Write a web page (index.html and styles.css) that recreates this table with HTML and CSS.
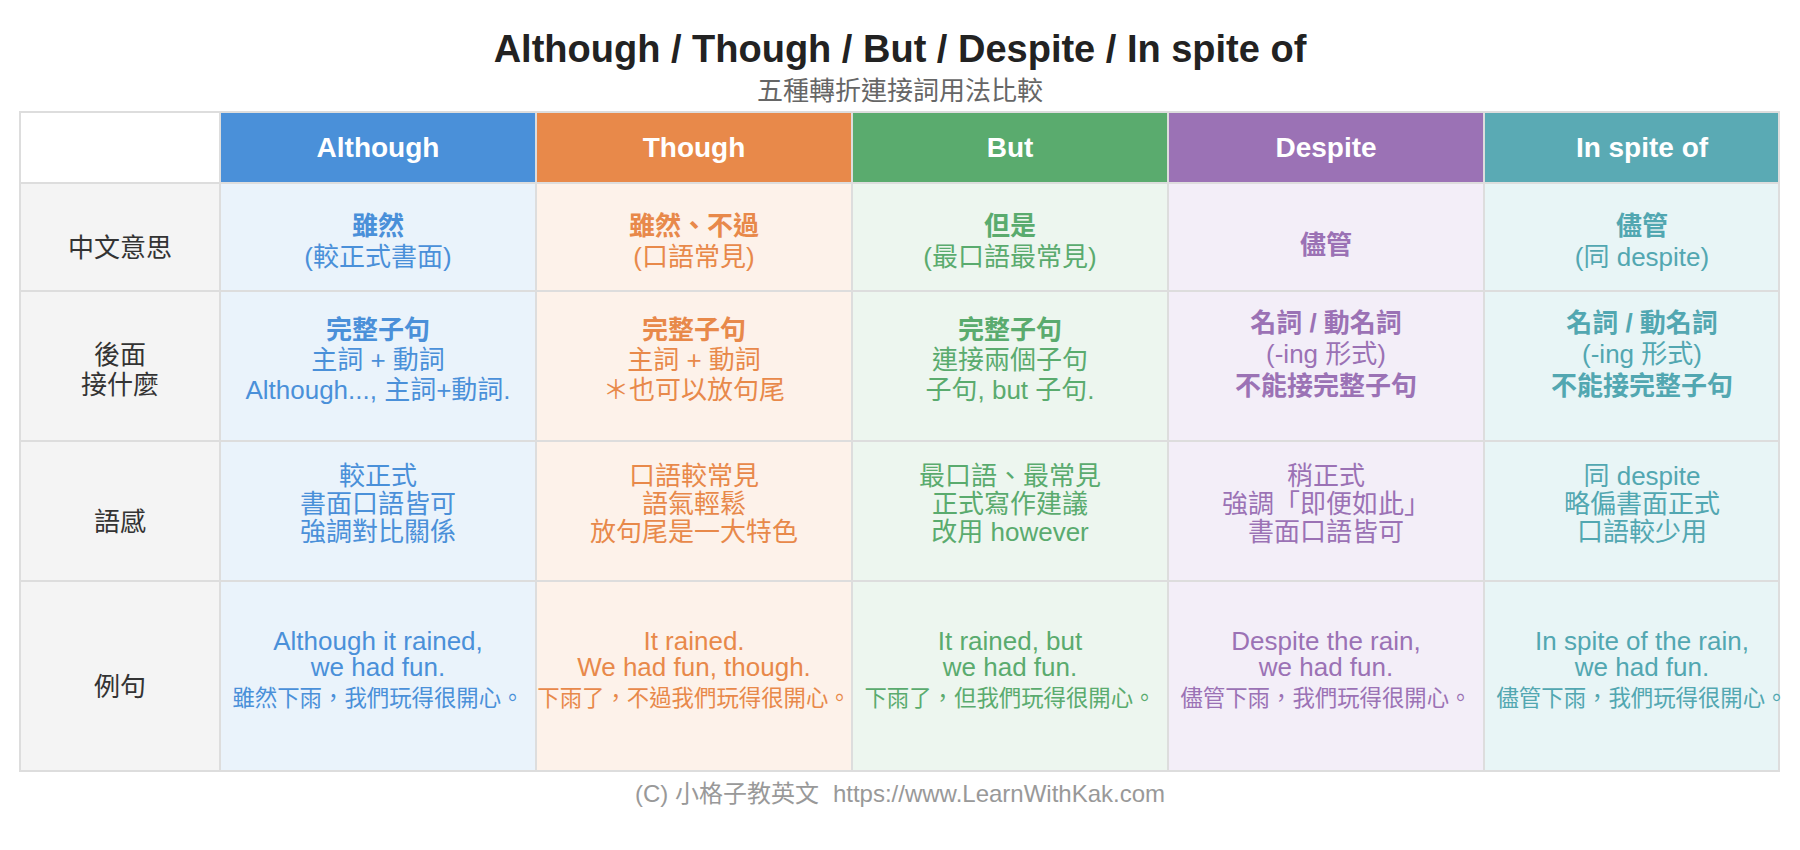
FILE: index.html
```html
<!DOCTYPE html>
<html lang="zh-Hant">
<head>
<meta charset="utf-8">
<title>Although / Though / But / Despite / In spite of</title>
<link rel="stylesheet" href="styles.css">
</head>
<body>
<div class="page">
  <h1 class="title">Although / Though / But / Despite / In spite of</h1>
  <div class="subtitle">五種轉折連接詞用法比較</div>

  <div class="grid">
    <div class="cell corner"></div>
    <div class="cell head h-blue">Although</div>
    <div class="cell head h-orange">Though</div>
    <div class="cell head h-green">But</div>
    <div class="cell head h-purple">Despite</div>
    <div class="cell head h-teal">In spite of</div>

    <div class="cell label r1">中文意思</div>
    <div class="cell c r1 blue"><b>雖然</b><span>(較正式書面)</span></div>
    <div class="cell c r1 orange"><b>雖然、不過</b><span>(口語常見)</span></div>
    <div class="cell c r1 green"><b>但是</b><span>(最口語最常見)</span></div>
    <div class="cell c r1 single purple"><b>儘管</b></div>
    <div class="cell c r1 teal"><b>儘管</b><span>(同 despite)</span></div>

    <div class="cell label r2"><span>後面</span><span>接什麼</span></div>
    <div class="cell c r2 blue"><b>完整子句</b><span>主詞 + 動詞</span><span>Although..., 主詞+動詞.</span></div>
    <div class="cell c r2 orange"><b>完整子句</b><span>主詞 + 動詞</span><span>＊也可以放句尾</span></div>
    <div class="cell c r2 green"><b>完整子句</b><span>連接兩個子句</span><span>子句, but 子句.</span></div>
    <div class="cell c r2 np purple"><b>名詞 / 動名詞</b><span>(-ing 形式)</span><b>不能接完整子句</b></div>
    <div class="cell c r2 np teal"><b>名詞 / 動名詞</b><span>(-ing 形式)</span><b>不能接完整子句</b></div>

    <div class="cell label r3">語感</div>
    <div class="cell c r3 blue"><span>較正式</span><span>書面口語皆可</span><span>強調對比關係</span></div>
    <div class="cell c r3 orange"><span>口語較常見</span><span>語氣輕鬆</span><span>放句尾是一大特色</span></div>
    <div class="cell c r3 green"><span>最口語、最常見</span><span>正式寫作建議</span><span>改用 however</span></div>
    <div class="cell c r3 purple"><span>稍正式</span><span>強調「即便如此」</span><span>書面口語皆可</span></div>
    <div class="cell c r3 teal"><span>同 despite</span><span>略偏書面正式</span><span>口語較少用</span></div>

    <div class="cell label r4">例句</div>
    <div class="cell c r4 blue"><span class="en">Although it rained,</span><span class="en">we had fun.</span><span class="zh">雖然下雨，我們玩得很開心。</span></div>
    <div class="cell c r4 orange"><span class="en">It rained.</span><span class="en">We had fun, though.</span><span class="zh">下雨了，不過我們玩得很開心。</span></div>
    <div class="cell c r4 green"><span class="en">It rained, but</span><span class="en">we had fun.</span><span class="zh">下雨了，但我們玩得很開心。</span></div>
    <div class="cell c r4 purple"><span class="en">Despite the rain,</span><span class="en">we had fun.</span><span class="zh">儘管下雨，我們玩得很開心。</span></div>
    <div class="cell c r4 teal"><span class="en">In spite of the rain,</span><span class="en">we had fun.</span><span class="zh">儘管下雨，我們玩得很開心。</span></div>
  </div>

  <div class="footer">(C) 小格子教英文<span class="url">https://www.LearnWithKak.com</span></div>
</div>
</body>
</html>
```

FILE: styles.css
```css
html, body {
  margin: 0;
  padding: 0;
  background: #ffffff;
}

body {
  font-family: "Liberation Sans", "Noto Sans CJK SC", "Noto Sans CJK TC", sans-serif;
  color: #333333;
}

.page {
  display: flex;
  flex-direction: column;
  align-items: center;
  padding-top: 27px;
}

.title {
  margin: 0;
  font-size: 38px;
  line-height: 44px;
  font-weight: bold;
  color: #222222;
}

.subtitle {
  margin-top: 5px;
  font-size: 26px;
  line-height: 30px;
  color: #666666;
}

.grid {
  align-self: flex-start;
  margin-left: 19px;
  margin-top: 5px;
  display: grid;
  grid-template-columns: 198px 314px 314px 314px 314px 293px;
  grid-template-rows: 69px 106px 148px 138px 188px;
  gap: 2px;
  background: #dddddd;
  border: 2px solid #dddddd;
}

.cell {
  display: flex;
  flex-direction: column;
  justify-content: center;
  align-items: center;
  text-align: center;
  font-size: 26px;
  line-height: 30px;
  white-space: nowrap;
  box-sizing: border-box;
  min-width: 0;
}

.cell b {
  font-weight: bold;
}

.corner {
  background: #ffffff;
}

.head {
  font-size: 28px;
  font-weight: bold;
  color: #ffffff;
  line-height: 32px;
}

.h-blue { background: #4a90d9; }
.h-orange { background: #e8894a; }
.h-green { background: #5aab6e; }
.h-purple { background: #9b72b5; }
.h-teal { background: #5aaab4; padding-left: 21px; }

.label {
  background: #f4f4f4;
  color: #333333;
}

.blue { background: #eaf3fb; color: #4a90d9; }
.orange { background: #fdf2ea; color: #e8894a; }
.green { background: #edf6ef; color: #5aab6e; }
.purple { background: #f3eef8; color: #9b72b5; }
.teal { background: #e8f5f6; color: #52a7b1; padding-left: 21px; }

/* row 1 */
.label.r1 { padding-top: 22px; }
.c.r1 { padding-top: 9px; line-height: 31px; }
.c.r1.single { padding-top: 16px; }

/* row 2 */
.label.r2 { padding-top: 8px; }
.c.r2 { padding-bottom: 12px; }
.c.r2.np { padding-bottom: 22px; line-height: 31.5px; }

/* row 3 */
.label.r3 { padding-top: 21px; }
.c.r3 { padding-bottom: 14px; line-height: 28px; }

/* row 4 */
.label.r4 { padding-top: 21px; }
.c.r4 { padding-bottom: 10px; }
.c.r4 .en { line-height: 26px; }
.c.r4 .zh {
  font-size: 22.4px;
  line-height: 30px;
  margin-top: 4px;
}

.footer {
  margin-top: 7px;
  font-size: 24px;
  line-height: 30px;
  color: #999999;
}

.footer .url {
  margin-left: 14px;
}
```
